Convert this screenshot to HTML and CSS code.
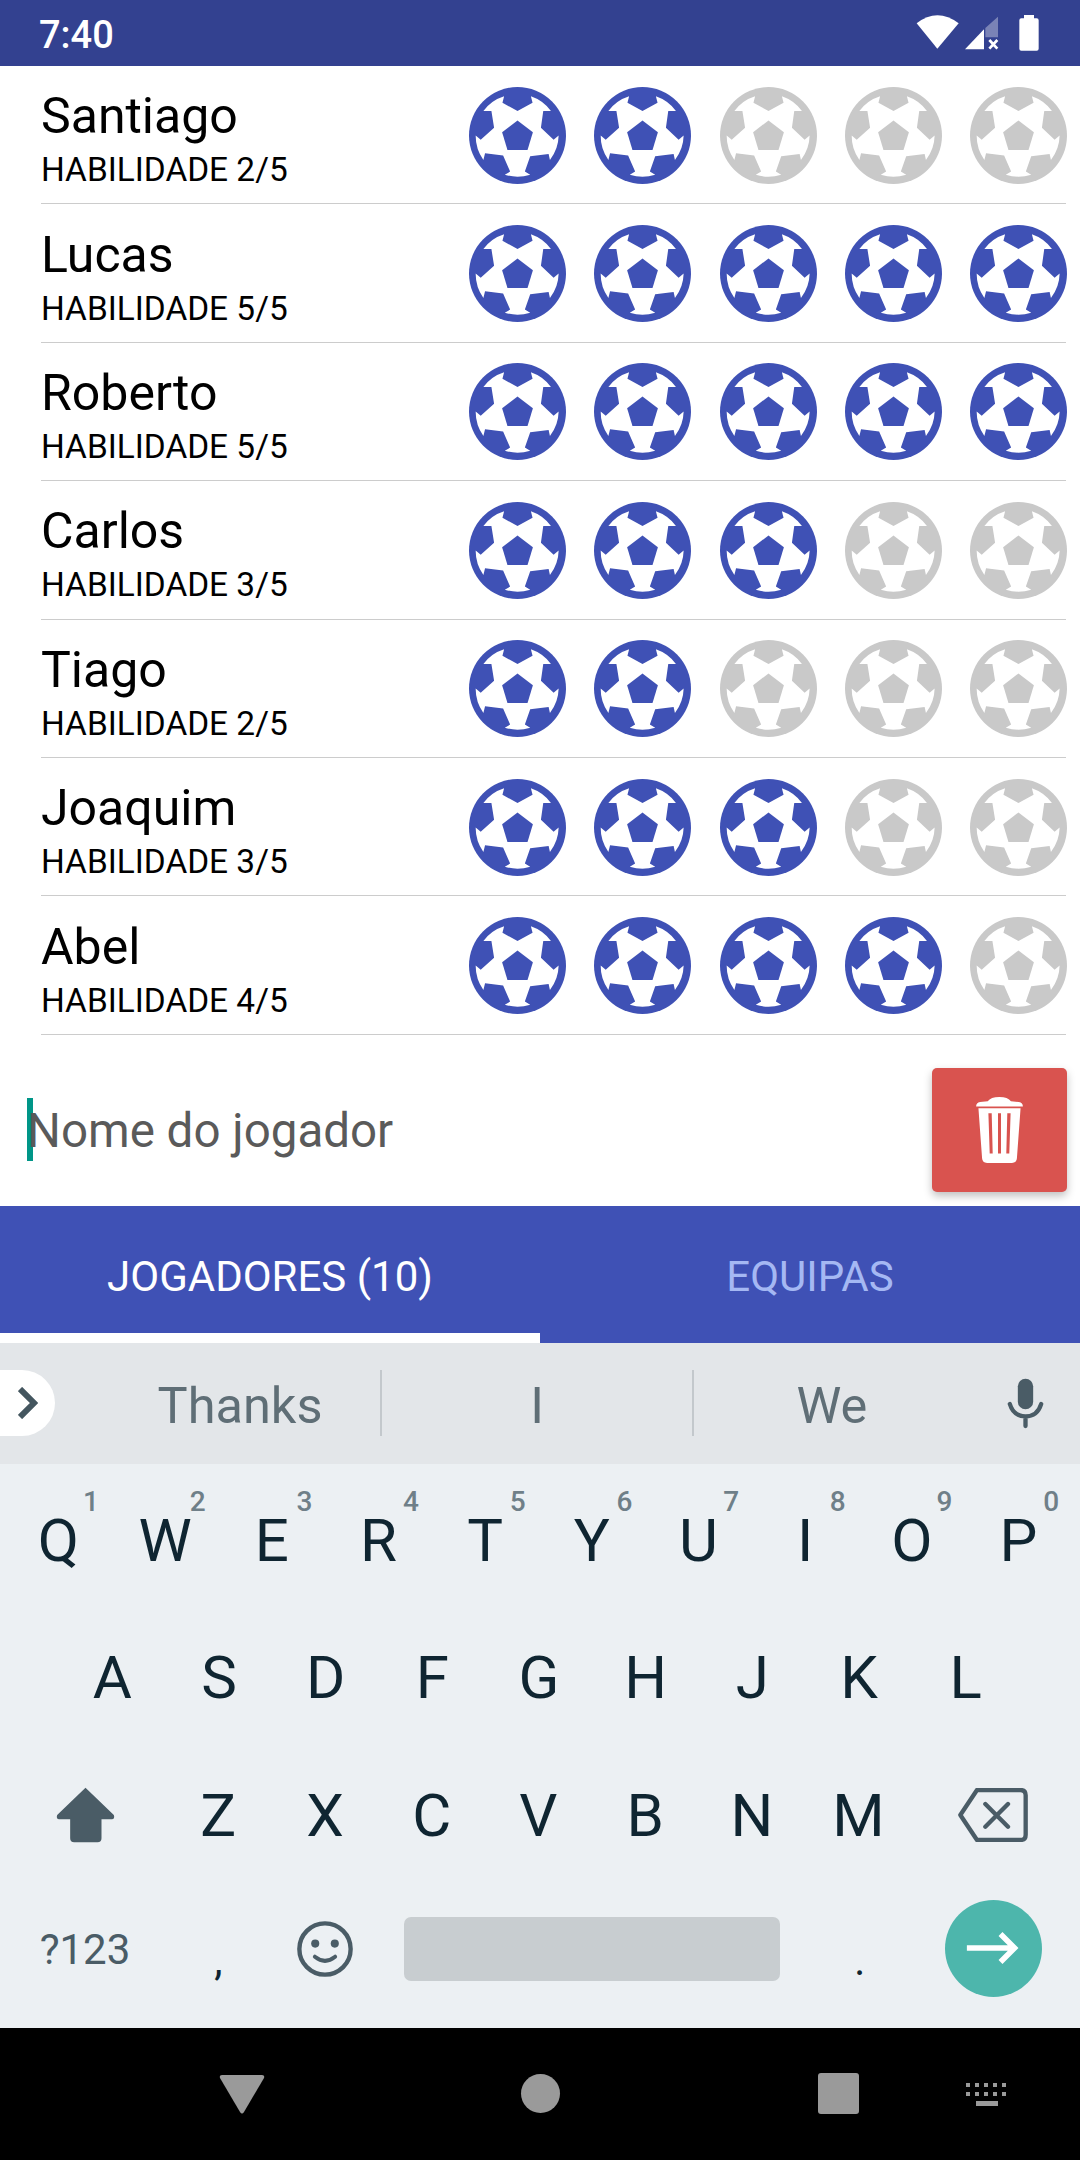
FILE: index.html
```html
<!DOCTYPE html>
<html lang="pt">
<head>
  <meta charset="UTF-8" />
  <meta name="viewport" content="width=device-width, initial-scale=1.0"/>
  <title>Jogadores</title>
  <link rel="stylesheet" href="styles.css">
</head>
<body>
  <svg class="sprites" width="0" height="0">
    <symbol id="ball" viewBox="55 50 290 290">
      <circle cx="200" cy="195" r="145" fill="currentColor"/>
      <path fill="#fff" d="M160 78 L155 97 L200 122 L245 97 L240 78 A123 123 0 0 1 300 122 L277 122 L270 172 L308 208 L323 195 A123 123 0 0 1 297 268 L293 250 L238 257 L222 303 L238 312 A123 123 0 0 1 162 312 L178 303 L157 255 L103 248 L98 268 A123 123 0 0 1 75 195 L90 208 L130 172 L122 122 L98 122 A123 123 0 0 1 160 78 Z"/>
      <path fill="currentColor" d="M200 150 L246 185 L230 238 L170 238 L154 185 Z"/>
    </symbol>
  </svg>

  <div class="status-bar">
    <span class="time">7:40</span>
    <svg class="status-icons" width="200" height="66" viewBox="0 0 600 198">
      <path fill="#fff" d="M110 70 Q172 22 236 70 L172 146 Z"/>
      <path fill="#fff" d="M255 148 L312 88 L312 148 Z"/>
      <path fill="#fff" opacity="0.35" d="M316 84 L354 50 L354 112 L316 112 Z"/>
      <path stroke="#fff" stroke-width="8" d="M328 120 L352 146 M352 120 L328 146"/>
      <path fill="#fff" d="M432 45 H462 V55 H470 Q476 55 476 61 V146 Q476 152 470 152 H424 Q418 152 418 146 V61 Q418 55 424 55 H432 Z"/>
    </svg>
  </div>

  <div class="players">
    <div class="player">
      <div class="player-info"><div class="name">Santiago</div><div class="skill">HABILIDADE 2/5</div></div>
      <div class="balls">
        <svg class="ball on"><use href="#ball"/></svg><svg class="ball on"><use href="#ball"/></svg><svg class="ball"><use href="#ball"/></svg><svg class="ball"><use href="#ball"/></svg><svg class="ball"><use href="#ball"/></svg>
      </div>
    </div>
    <div class="player">
      <div class="player-info"><div class="name">Lucas</div><div class="skill">HABILIDADE 5/5</div></div>
      <div class="balls">
        <svg class="ball on"><use href="#ball"/></svg><svg class="ball on"><use href="#ball"/></svg><svg class="ball on"><use href="#ball"/></svg><svg class="ball on"><use href="#ball"/></svg><svg class="ball on"><use href="#ball"/></svg>
      </div>
    </div>
    <div class="player">
      <div class="player-info"><div class="name">Roberto</div><div class="skill">HABILIDADE 5/5</div></div>
      <div class="balls">
        <svg class="ball on"><use href="#ball"/></svg><svg class="ball on"><use href="#ball"/></svg><svg class="ball on"><use href="#ball"/></svg><svg class="ball on"><use href="#ball"/></svg><svg class="ball on"><use href="#ball"/></svg>
      </div>
    </div>
    <div class="player">
      <div class="player-info"><div class="name">Carlos</div><div class="skill">HABILIDADE 3/5</div></div>
      <div class="balls">
        <svg class="ball on"><use href="#ball"/></svg><svg class="ball on"><use href="#ball"/></svg><svg class="ball on"><use href="#ball"/></svg><svg class="ball"><use href="#ball"/></svg><svg class="ball"><use href="#ball"/></svg>
      </div>
    </div>
    <div class="player">
      <div class="player-info"><div class="name">Tiago</div><div class="skill">HABILIDADE 2/5</div></div>
      <div class="balls">
        <svg class="ball on"><use href="#ball"/></svg><svg class="ball on"><use href="#ball"/></svg><svg class="ball"><use href="#ball"/></svg><svg class="ball"><use href="#ball"/></svg><svg class="ball"><use href="#ball"/></svg>
      </div>
    </div>
    <div class="player">
      <div class="player-info"><div class="name">Joaquim</div><div class="skill">HABILIDADE 3/5</div></div>
      <div class="balls">
        <svg class="ball on"><use href="#ball"/></svg><svg class="ball on"><use href="#ball"/></svg><svg class="ball on"><use href="#ball"/></svg><svg class="ball"><use href="#ball"/></svg><svg class="ball"><use href="#ball"/></svg>
      </div>
    </div>
    <div class="player">
      <div class="player-info"><div class="name">Abel</div><div class="skill">HABILIDADE 4/5</div></div>
      <div class="balls">
        <svg class="ball on"><use href="#ball"/></svg><svg class="ball on"><use href="#ball"/></svg><svg class="ball on"><use href="#ball"/></svg><svg class="ball on"><use href="#ball"/></svg><svg class="ball"><use href="#ball"/></svg>
      </div>
    </div>
  </div>

  <div class="add-player">
    <span class="caret"></span>
    <span class="placeholder">Nome do jogador</span>
    <div class="delete-btn">
      <svg width="49" height="68" viewBox="165 108 147 205">
        <path fill="#fff" fill-rule="evenodd" d="M168 140 Q168 128 180 126 L203 124 Q212 111 238 111 Q264 111 273 124 L297 126 Q309 128 309 140 Z M175 145 H302 L291 296 Q290 310 276 310 H201 Q187 310 186 296 Z M205 160 L209 281 H218 L215 160 Z M234 160 V281 H243 V160 Z M262 160 L259 281 H268 L272 160 Z"/>
      </svg>
    </div>
  </div>

  <div class="tabs">
    <div class="tab active">JOGADORES (10)</div>
    <div class="tab">EQUIPAS</div>
  </div>

  <div class="suggestions">
    <div class="expand">
      <svg width="20" height="32" viewBox="0 0 20 32"><path fill="none" stroke="#44565f" stroke-width="6" d="M2 2 L16 16 L2 30"/></svg>
    </div>
    <div class="word first">Thanks</div>
    <div class="word mid">I</div>
    <div class="word last">We</div>
    <div class="mic">
      <svg width="39" height="52" viewBox="200 50 116 156">
        <rect x="235" y="55" width="46" height="92" rx="23" fill="#4a5c66"/>
        <path fill="none" stroke="#4a5c66" stroke-width="13" stroke-linecap="round" d="M211 131 Q222 168 258 168 Q294 168 305 131 M258 168 V197"/>
      </svg>
    </div>
  </div>

  <div class="keyboard">
    <div class="key-row">
      <div class="key">Q<span class="num">1</span></div>
      <div class="key">W<span class="num">2</span></div>
      <div class="key">E<span class="num">3</span></div>
      <div class="key">R<span class="num">4</span></div>
      <div class="key">T<span class="num">5</span></div>
      <div class="key">Y<span class="num">6</span></div>
      <div class="key">U<span class="num">7</span></div>
      <div class="key">I<span class="num">8</span></div>
      <div class="key">O<span class="num">9</span></div>
      <div class="key">P<span class="num">0</span></div>
    </div>
    <div class="key-row centered">
      <div class="key">A</div>
      <div class="key">S</div>
      <div class="key">D</div>
      <div class="key">F</div>
      <div class="key">G</div>
      <div class="key">H</div>
      <div class="key">J</div>
      <div class="key">K</div>
      <div class="key">L</div>
    </div>
    <div class="key-row">
      <div class="key wide">
        <svg width="61" height="56" viewBox="76 46 182 168"><path fill="#4a5c66" d="M167 48 L252 130 Q256 142 246 143 H215 V200 Q215 212 203 212 H133 Q121 212 121 200 V143 H88 Q78 142 82 130 Z"/></svg>
      </div>
      <div class="key">Z</div>
      <div class="key">X</div>
      <div class="key">C</div>
      <div class="key">V</div>
      <div class="key">B</div>
      <div class="key">N</div>
      <div class="key">M</div>
      <div class="key wide backspace">
        <svg width="70" height="54" viewBox="55 58 210 162"><path fill="none" stroke="#4a5c66" stroke-width="13" stroke-linecap="round" stroke-linejoin="round" d="M112 64 H242 Q258 64 258 80 V198 Q258 214 242 214 H112 L62 139 Z M137 106 L205 174 M205 106 L137 174"/></svg>
      </div>
    </div>
    <div class="key-row bottom">
      <div class="key wide symbols">?123</div>
      <div class="key small-punct">,</div>
      <div class="key">
        <svg width="56" height="56" viewBox="52 64 166 166"><circle cx="135" cy="147" r="76" fill="none" stroke="#4a5c66" stroke-width="13"/><circle cx="106" cy="131" r="12" fill="#4a5c66"/><circle cx="164" cy="131" r="12" fill="#4a5c66"/><path fill="none" stroke="#4a5c66" stroke-width="12" stroke-linecap="round" d="M105 170 Q135 194 165 170"/></svg>
      </div>
      <div class="key space-key"><div class="space-bar"></div></div>
      <div class="key small-punct">.</div>
      <div class="key wide">
        <div class="go">
          <svg width="54" height="32" viewBox="78 124 160 98"><path fill="none" stroke="#fff" stroke-width="17" d="M78 173 H222 M181 130 L224 173 L181 216"/></svg>
        </div>
      </div>
    </div>
  </div>

  <div class="nav-bar">
    <svg class="nav-back" width="46" height="40" viewBox="0 0 46 40"><path fill="#9a9a9a" d="M3 1 H43 Q46 1 45 4 L25 38 Q23 41 21 38 L1 4 Q0 1 3 1 Z"/></svg>
    <div class="nav-home"></div>
    <div class="nav-recent"></div>
    <svg class="nav-keys" width="42" height="24" viewBox="0 0 42 24">
      <path stroke="#9a9a9a" stroke-width="4" stroke-dasharray="4 5" d="M0 3 H42 M0 12 H42"/>
      <rect x="10" y="19" width="22" height="5" fill="#9a9a9a"/>
    </svg>
  </div>
</body>
</html>
```

FILE: styles.css
```css
* {
  box-sizing: border-box;
}

body {
  margin: 0;
  width: 1080px;
  height: 2160px;
  overflow: hidden;
  background-color: white;
  font-family: Roboto, sans-serif;
}

.sprites {
  position: absolute;
}

.status-bar {
  height: 66px;
  background-color: #334190;
  display: flex;
  align-items: center;
  justify-content: space-between;
  padding-left: 39px;
}

.time {
  color: white;
  font-size: 38px;
  font-weight: 500;
  padding-top: 3px;
}

.status-icons {
  display: block;
}

.players {
  padding: 0 14px 0 41px;
}

.player {
  height: 138.4px;
  display: flex;
  align-items: center;
  justify-content: space-between;
  border-bottom: 1px solid #cccccc;
}

.name {
  font-size: 50px;
  line-height: 70px;
  color: #000;
}

.skill {
  font-size: 33.4px;
  line-height: 37px;
  color: #000;
}

.balls {
  display: flex;
  gap: 28.2px;
  margin-right: -1px;
  margin-top: 1px;
}

.ball {
  display: block;
  width: 97px;
  height: 97px;
  color: #c9c9c9;
}

.ball.on {
  color: #3f51b5;
}

.add-player {
  height: 171px;
  display: flex;
  align-items: center;
  padding: 33px 13px 14px 27px;
}

.caret {
  width: 6px;
  height: 63px;
  margin-right: -6px;
  background-color: #009688;
}

.placeholder {
  flex: 1;
  font-size: 47.5px;
  color: #5a5a5a;
  padding-top: 2px;
}

.delete-btn {
  width: 135px;
  height: 124px;
  background-color: #d9534f;
  border-radius: 5px;
  box-shadow: 0 4px 8px rgba(0, 0, 0, 0.25);
  display: flex;
  align-items: center;
  justify-content: center;
}

.tabs {
  height: 137px;
  display: flex;
  background-color: #3f51b5;
}

.tab {
  width: 540px;
  display: flex;
  align-items: center;
  justify-content: center;
  font-size: 42px;
  color: #a5b8f3;
  padding-top: 5px;
}

.tab.active {
  color: white;
  border-bottom: 10px solid white;
  padding-top: 15px;
}

.suggestions {
  height: 121px;
  background-color: #e3e6e9;
  display: flex;
  align-items: center;
}

.expand {
  width: 55px;
  height: 66px;
  background-color: white;
  border-radius: 0 33px 33px 0;
  display: flex;
  align-items: center;
  justify-content: center;
}

.word {
  height: 66px;
  display: flex;
  align-items: center;
  justify-content: center;
  font-size: 50.5px;
  color: #5f6e76;
  padding-top: 5px;
}

.word.first {
  width: 282px;
  margin-left: 45px;
  border-right: 2px solid #c3c8cc;
}

.word.mid {
  width: 312px;
  border-right: 2px solid #c3c8cc;
}

.word.last {
  width: 276px;
}

.mic {
  flex: 1;
  display: flex;
  justify-content: center;
}

.keyboard {
  height: 564px;
  background-color: #ecf0f3;
  padding: 8px 5px 0;
}

.key-row {
  height: 137.5px;
  display: flex;
}

.key-row.centered {
  justify-content: center;
  padding-right: 2px;
}

.key-row.bottom {
  margin-top: -3.5px;
}

.key {
  position: relative;
  width: 106.7px;
  display: flex;
  align-items: center;
  justify-content: center;
  font-size: 60px;
  color: #0f2531;
}

.key.wide {
  width: 160px;
}

.key.backspace {
  padding-left: 2px;
}

.num {
  position: absolute;
  top: 13px;
  left: 78px;
  font-size: 28px;
  font-weight: 500;
  color: #6f7f88;
}

.symbols {
  font-size: 42px;
  color: #4a5c66;
}

.small-punct {
  font-size: 42px;
  padding-top: 22px;
}

.space-key {
  width: 428px;
}

.space-bar {
  width: 376px;
  height: 64px;
  background-color: #c8cdd0;
  border-radius: 7px;
}

.go {
  width: 97px;
  height: 97px;
  margin-bottom: 2px;
  border-radius: 50%;
  background-color: #4db6ac;
  display: flex;
  align-items: center;
  justify-content: center;
}

.nav-bar {
  height: 132px;
  background-color: black;
  display: flex;
  align-items: center;
}

.nav-back {
  margin-left: 219px;
}

.nav-home {
  width: 39px;
  height: 39px;
  border-radius: 50%;
  background-color: #9a9a9a;
  margin-left: 256px;
}

.nav-recent {
  width: 41px;
  height: 41px;
  border-radius: 3px;
  background-color: #9a9a9a;
  margin-left: 258px;
}

.nav-keys {
  margin-left: 107px;
}
```
